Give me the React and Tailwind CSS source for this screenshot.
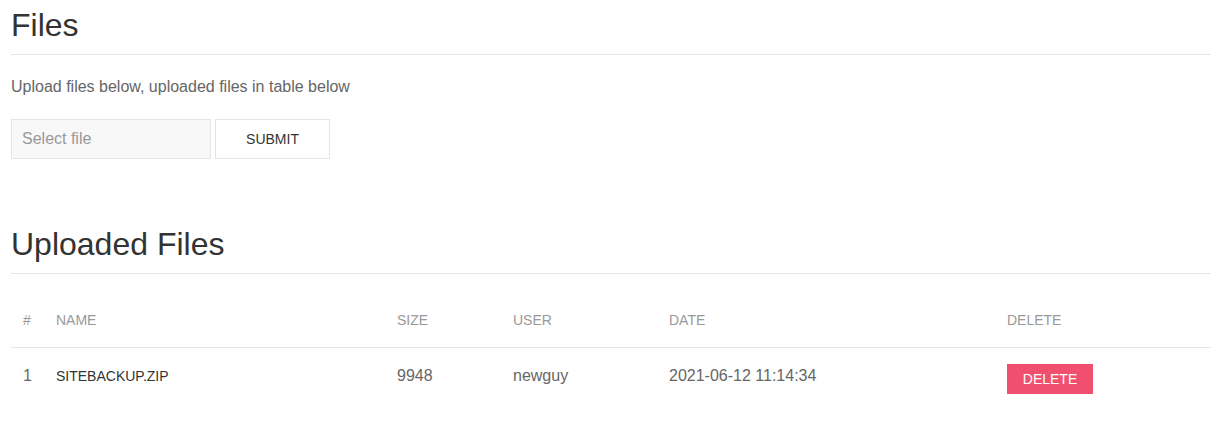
export default function App() {
  const font = { fontFamily: '"Liberation Sans", Arial, sans-serif' };
  return (
    <div className="bg-white min-h-[432px]" style={font}>
      <div className="ml-[11px] w-[1200px]">
        <h1 className="pt-[5px] pb-[9px] text-[32px] leading-[40px] font-normal text-[#333] border-b border-[#e5e5e5]">
          Files
        </h1>
        <p className="mt-[20px] text-[16px] leading-[24px] text-[#666]">
          Upload files below, uploaded files in table below
        </p>
        <div className="mt-[20px] flex gap-[4px]">
          <div className="w-[200px] h-[40px] bg-[#f8f8f8] border border-[#e5e5e5] flex items-center pl-[10px] text-[16px] text-[#999]">
            Select file
          </div>
          <button className="w-[115px] h-[40px] bg-white border border-[#e5e5e5] text-[14px] uppercase text-[#333]">
            Submit
          </button>
        </div>
        <h2 className="mt-[60px] pt-[5px] pb-[9px] text-[32px] leading-[40px] font-normal text-[#333] border-b border-[#e5e5e5]">
          Uploaded Files
        </h2>
        <table className="mt-[20px] w-[1200px] table-fixed border-collapse">
          <colgroup>
            <col className="w-[33px]" />
            <col className="w-[341px]" />
            <col className="w-[116px]" />
            <col className="w-[156px]" />
            <col className="w-[338px]" />
            <col className="w-[216px]" />
          </colgroup>
          <thead>
            <tr>
              {["#", "Name", "Size", "User", "Date", "Delete"].map((h) => (
                <th
                  key={h}
                  className="px-[12px] pt-[16px] pb-[16px] text-left align-bottom text-[14px] leading-[21px] font-normal uppercase text-[#999]"
                >
                  {h}
                </th>
              ))}
            </tr>
          </thead>
          <tbody>
            <tr className="border-t border-[#e5e5e5]">
              <td className="px-[12px] py-[16px] align-top text-[16px] leading-[24px] text-[#666]">1</td>
              <td className="px-[12px] py-[16px] align-top text-[14px] leading-[24px] uppercase text-[#333]">
                sitebackup.zip
              </td>
              <td className="px-[12px] py-[16px] align-top text-[16px] leading-[24px] text-[#666]">9948</td>
              <td className="px-[12px] py-[16px] align-top text-[16px] leading-[24px] text-[#666]">newguy</td>
              <td className="px-[12px] py-[16px] align-top text-[16px] leading-[24px] text-[#666]">
                2021-06-12 11:14:34
              </td>
              <td className="px-[12px] py-[16px] align-top">
                <button className="w-[86px] h-[30px] bg-[#f0506e] text-white text-[14px] uppercase leading-[30px] block">
                  Delete
                </button>
              </td>
            </tr>
          </tbody>
        </table>
      </div>
    </div>
  );
}
